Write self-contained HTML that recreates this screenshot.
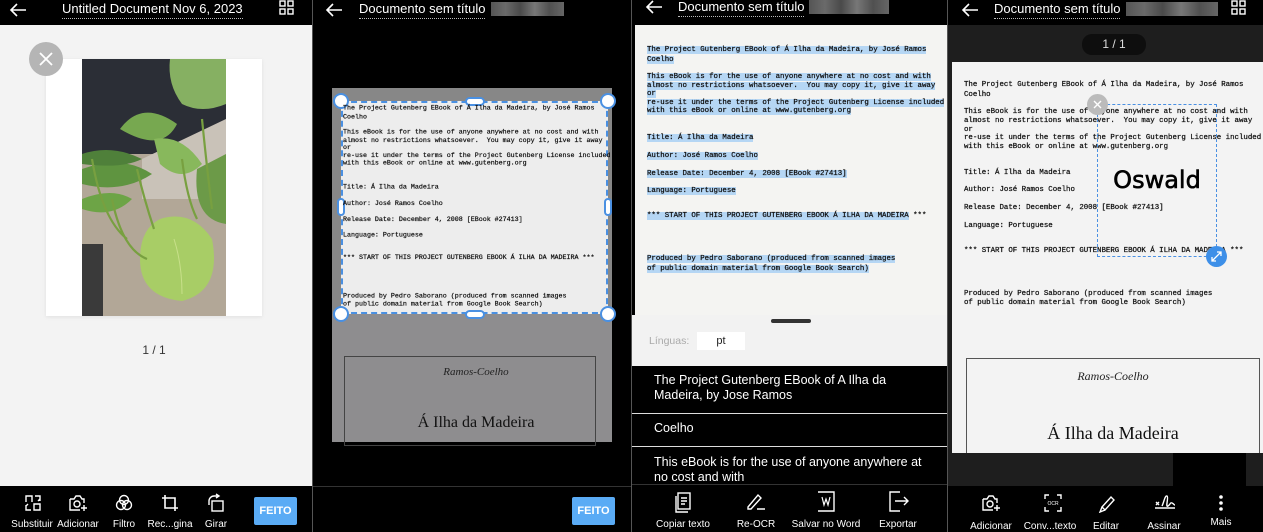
<!DOCTYPE html>
<html><head><meta charset="utf-8"><style>
*{margin:0;padding:0;box-sizing:border-box}
body{width:1263px;height:532px;overflow:hidden;background:#000;position:relative;font-family:"Liberation Sans",sans-serif}
.a{position:absolute}
.ttl{position:absolute;top:0;color:#fff;font-size:13px;line-height:18px;border-bottom:1px dotted #bbb;white-space:nowrap}
.blur{position:absolute;top:2px;height:14px;background:linear-gradient(90deg,#555,#6a6a6a 20%,#4a4a4a 40%,#777 60%,#505050 80%,#666)}
.doc{position:absolute;font-family:"Liberation Mono",monospace;font-size:7.4px;color:#111;white-space:pre;transform-origin:0 0;-webkit-text-stroke:0.25px #111}
.doc div{position:absolute;left:0;line-height:8px}
.hl div span{background:#b5d6f4}
.lbl{position:absolute;color:#fff;font-size:10px;text-align:center;width:70px;white-space:nowrap}
.feito{position:absolute;background:#5aabf5;color:#fff;font-weight:bold;font-size:11px;text-align:center;line-height:28px;border-radius:2px}
svg.i{position:absolute;fill:none;stroke:#fff;stroke-width:1.4}
.row{position:absolute;left:632px;width:315px;background:#000;color:#fff;font-size:12.5px;line-height:15px;padding-left:22px;padding-right:30px;border-bottom:1px solid #ddd}
</style></head><body>

<!-- PANEL 1 -->
<div class="a" style="left:0;top:25px;width:312px;height:461px;background:#f3f3f3"></div>
<svg class="i" style="left:8px;top:2px" width="20" height="16" viewBox="0 0 20 16"><path d="M18 8H3M9 2L3 8l6 6" stroke-width="1.6"/></svg>
<div class="ttl" style="left:62px">Untitled Document Nov 6, 2023</div>
<svg class="i" style="left:279px;top:0" width="16" height="15" viewBox="0 0 16 15"><rect x="1" y="1" width="5" height="5"/><rect x="9" y="1" width="5" height="5"/><rect x="1" y="9" width="5" height="5"/><rect x="9" y="9" width="5" height="5"/></svg>
<div class="a" style="left:46px;top:59px;width:216px;height:257px;background:#fff;box-shadow:0 1px 4px rgba(0,0,0,.08)"></div>
<svg class="a" style="left:82px;top:59px" width="144" height="257" viewBox="0 0 144 257">
<rect width="144" height="257" fill="#b2a797"/>
<rect width="144" height="95" fill="#2b2e36"/>
<path d="M60 100 L144 60 L144 140 L60 140Z" fill="#c9c2b8"/>
<rect x="0" y="185" width="21" height="72" fill="#3a3a3a"/>
<path d="M88 0 L144 0 L144 45 Q120 55 100 45 Q85 25 88 0Z" fill="#86b062"/>
<path d="M38 70 Q60 40 95 65 Q80 95 38 70Z" fill="#77a850"/>
<path d="M72 80 Q100 75 120 105 Q100 125 78 105Z" fill="#88b85c"/>
<path d="M0 110 Q40 95 70 115 Q40 135 0 125Z" fill="#5f9440"/>
<path d="M0 95 Q30 85 60 100 Q40 110 0 105Z" fill="#4f803a"/>
<path d="M0 140 Q30 128 50 140 Q30 160 0 150Z" fill="#6da446"/>
<path d="M115 110 L144 95 L144 165 Q110 160 115 110Z" fill="#6c9a48"/>
<path d="M78 160 Q110 150 130 180 Q140 232 100 242 Q58 238 58 200 Q58 170 78 160Z" fill="#a8cd66"/>
<path d="M92 180 Q100 205 100 235" stroke="#c8e08a" fill="none"/>
<path d="M10 100 Q20 160 45 180 M30 140 Q40 190 65 200 M55 110 Q62 140 72 170 M120 60 Q125 110 130 150 M100 100 Q105 140 115 160" stroke="#78a040" stroke-width="2.2" fill="none"/>
</svg>
<div class="a" style="left:29px;top:42px;width:34px;height:34px;border-radius:50%;background:#b5b5b5"></div>
<svg class="i" style="left:37px;top:50px" width="18" height="18" viewBox="0 0 18 18"><path d="M3 3L15 15M15 3L3 15" stroke-width="1.8"/></svg>
<div class="a" style="left:124px;top:343px;width:60px;text-align:center;font-size:12px;color:#333">1 / 1</div>
<svg class="i" style="left:24px;top:494px" width="18" height="18" viewBox="0 0 18 18"><path d="M2 8V2h6v6M2 11v5h5M10 16h6v-6h-6zM11 2h5v5M4 10l-2 2M14 7l2-2"/></svg>
<svg class="i" style="left:68px;top:494px" width="20" height="18" viewBox="0 0 20 18"><path d="M2 5h4l2-3h4l2 3h2v4M2 5v11h10"/><circle cx="9" cy="10" r="3"/><path d="M16 11v6M13 14h6"/></svg>
<svg class="i" style="left:115px;top:494px" width="18" height="18" viewBox="0 0 18 18"><circle cx="9" cy="6" r="4.5"/><circle cx="6" cy="11" r="4.5"/><circle cx="12" cy="11" r="4.5"/></svg>
<svg class="i" style="left:161px;top:494px" width="18" height="18" viewBox="0 0 18 18"><path d="M4 1v13h13M1 4h13v13" stroke-width="1.6"/></svg>
<svg class="i" style="left:207px;top:493px" width="18" height="19" viewBox="0 0 18 19"><rect x="5" y="8" width="11" height="10"/><path d="M2 12V8a5 5 0 0 1 5-5h4M9 1l3 2-3 2"/></svg>
<div class="lbl" style="left:-3px;top:519px">Substituir</div>
<div class="lbl" style="left:43px;top:519px">Adicionar</div>
<div class="lbl" style="left:89px;top:519px">Filtro</div>
<div class="lbl" style="left:135px;top:519px">Rec...gina</div>
<div class="lbl" style="left:181px;top:519px">Girar</div>
<div class="feito" style="left:254px;top:497px;width:43px;height:28px">FEITO</div>

<div class="a" style="left:312px;top:0;width:1px;height:532px;background:#555"></div>

<!-- PANEL 2 -->
<svg class="i" style="left:324px;top:2px" width="20" height="16" viewBox="0 0 20 16"><path d="M18 8H3M9 2L3 8l6 6" stroke-width="1.6"/></svg>
<div class="ttl" style="left:359px">Documento sem título</div>
<div class="blur" style="left:491px;width:73px"></div>
<div class="a" style="left:332px;top:88px;width:280px;height:354px;background:#878787"></div>
<div class="a" style="left:341px;top:101px;width:267px;height:213px;background:#ededed"></div>
<div class="a" style="left:332px;top:314px;width:280px;height:128px;background:#8e8d8f"></div>
<div class="a" style="left:344px;top:356px;width:252px;height:90px;border:1px solid #444"></div>
<div class="a" style="left:344px;top:366px;width:264px;text-align:center;font-family:'Liberation Serif',serif;font-style:italic;font-size:11px;color:#222">Ramos-Coelho</div>
<div class="a" style="left:344px;top:414px;width:264px;text-align:center;font-family:'Liberation Serif',serif;font-size:16px;color:#111">Á Ilha da Madeira</div>
<div class="a" style="left:341px;top:101px;width:267px;height:213px;border:2px dashed #4a90e2"></div>
<div class="a" style="left:333px;top:93px;width:16px;height:16px;border-radius:50%;background:#fff;border:2px solid #4a90e2"></div>
<div class="a" style="left:600px;top:93px;width:16px;height:16px;border-radius:50%;background:#fff;border:2px solid #4a90e2"></div>
<div class="a" style="left:333px;top:306px;width:16px;height:16px;border-radius:50%;background:#fff;border:2px solid #4a90e2"></div>
<div class="a" style="left:600px;top:306px;width:16px;height:16px;border-radius:50%;background:#fff;border:2px solid #4a90e2"></div>
<div class="a" style="left:465px;top:97px;width:20px;height:9px;border-radius:5px;background:#fff;border:2px solid #4a90e2"></div>
<div class="a" style="left:465px;top:310px;width:20px;height:9px;border-radius:5px;background:#fff;border:2px solid #4a90e2"></div>
<div class="a" style="left:337px;top:198px;width:8px;height:18px;border-radius:5px;background:#fff;border:2px solid #4a90e2"></div>
<div class="a" style="left:604px;top:198px;width:8px;height:18px;border-radius:5px;background:#fff;border:2px solid #4a90e2"></div>
<div class="doc" style="left:343px;top:104px;transform:scale(0.9)">
<div style="top:1px">The Project Gutenberg EBook of Á Ilha da Madeira, by José Ramos</div>
<div style="top:11px">Coelho</div>
<div style="top:28px">This eBook is for the use of anyone anywhere at no cost and with</div>
<div style="top:37px">almost no restrictions whatsoever.  You may copy it, give it away</div>
<div style="top:45px">or</div>
<div style="top:54px">re-use it under the terms of the Project Gutenberg License included</div>
<div style="top:62px">with this eBook or online at www.gutenberg.org</div>
<div style="top:89px">Title: Á Ilha da Madeira</div>
<div style="top:107px">Author: José Ramos Coelho</div>
<div style="top:125px">Release Date: December 4, 2008 [EBook #27413]</div>
<div style="top:142px">Language: Portuguese</div>
<div style="top:167px">*** START OF THIS PROJECT GUTENBERG EBOOK Á ILHA DA MADEIRA ***</div>
<div style="top:210px">Produced by Pedro Saborano (produced from scanned images</div>
<div style="top:219px">of public domain material from Google Book Search)</div>
</div>
<div class="a" style="left:313px;top:486px;width:318px;height:1px;background:#333"></div>
<div class="feito" style="left:572px;top:497px;width:43px;height:28px">FEITO</div>

<div class="a" style="left:631px;top:0;width:1px;height:532px;background:#555"></div>

<!-- PANEL 3 -->
<svg class="i" style="left:644px;top:-1px" width="20" height="16" viewBox="0 0 20 16"><path d="M18 8H3M9 2L3 8l6 6" stroke-width="1.6"/></svg>
<div class="ttl" style="left:678px;top:-2px">Documento sem título</div>
<div class="blur" style="left:809px;top:0;width:80px"></div>
<div class="a" style="left:635px;top:25px;width:312px;height:290px;background:#f4f4f2"></div>
<div class="doc hl" style="left:647px;top:45px">
<div style="top:1px"><span>The Project Gutenberg EBook of Á Ilha da Madeira, by José Ramos</span></div>
<div style="top:11px"><span>Coelho</span></div>
<div style="top:28px"><span>This eBook is for the use of anyone anywhere at no cost and with</span></div>
<div style="top:37px"><span>almost no restrictions whatsoever.  You may copy it, give it away</span></div>
<div style="top:45px"><span>or</span></div>
<div style="top:54px"><span>re-use it under the terms of the Project Gutenberg License included</span></div>
<div style="top:62px"><span>with this eBook or online at www.gutenberg.org</span></div>
<div style="top:89px"><span>Title: Á Ilha da Madeira</span></div>
<div style="top:107px"><span>Author: José Ramos Coelho</span></div>
<div style="top:125px"><span>Release Date: December 4, 2008 [EBook #27413]</span></div>
<div style="top:142px"><span>Language: Portuguese</span></div>
<div style="top:167px"><span>*** START OF THIS PROJECT GUTENBERG EBOOK Á ILHA DA MADEIRA</span> ***</div>
<div style="top:210px"><span>Produced by Pedro Saborano (produced from scanned images</span></div>
<div style="top:220px"><span>of public domain material from Google Book Search)</span></div>
</div>
<div class="a" style="left:632px;top:315px;width:315px;height:51px;background:#f2f2f2"></div>
<div class="a" style="left:771px;top:319px;width:40px;height:4px;border-radius:2px;background:#333"></div>
<div class="a" style="left:649px;top:335px;font-size:10.5px;color:#aaa">Línguas:</div>
<div class="a" style="left:697px;top:332px;width:48px;height:18px;background:#fff;font-size:11px;line-height:18px;text-align:center;color:#222">pt</div>
<div class="row" style="top:366px;height:48px;padding-top:7px;padding-right:60px">The Project Gutenberg EBook of A Ilha da Madeira, by Jose Ramos</div>
<div class="row" style="top:414px;height:33px;padding-top:7px">Coelho</div>
<div class="row" style="top:447px;height:38px;padding-top:8px;padding-right:18px;border-bottom:1px solid #333">This eBook is for the use of anyone anywhere at no cost and with</div>
<svg class="i" style="left:674px;top:492px" width="18" height="21" viewBox="0 0 18 21"><rect x="4" y="1" width="12" height="16"/><path d="M2 4v16h12M7 6h6M7 9h6M7 12h4"/></svg>
<svg class="i" style="left:745px;top:492px" width="22" height="20" viewBox="0 0 22 20"><path d="M3 15L13 3l3 3L6 17H3zM12 17h8"/></svg>
<svg class="i" style="left:816px;top:491px" width="20" height="21" viewBox="0 0 20 21"><path d="M4 1h14v19H4M2 1h2M2 20h2"/><path d="M6 6l2 8 2-6 2 6 2-8" stroke-width="1.2"/></svg>
<svg class="i" style="left:888px;top:491px" width="22" height="21" viewBox="0 0 22 21"><path d="M12 1H2v19h10M7 10h13M16 6l4 4-4 4"/></svg>
<div class="lbl" style="left:648px;top:519px">Copiar texto</div>
<div class="lbl" style="left:721px;top:519px">Re-OCR</div>
<div class="lbl" style="left:791px;top:519px">Salvar no Word</div>
<div class="lbl" style="left:863px;top:519px">Exportar</div>

<div class="a" style="left:947px;top:0;width:1px;height:532px;background:#555"></div>

<!-- PANEL 4 -->
<div class="a" style="left:948px;top:25px;width:315px;height:461px;background:#1e1e1e"></div>
<svg class="i" style="left:960px;top:2px" width="20" height="16" viewBox="0 0 20 16"><path d="M18 8H3M9 2L3 8l6 6" stroke-width="1.6"/></svg>
<div class="ttl" style="left:994px">Documento sem título</div>
<div class="blur" style="left:1126px;width:92px"></div>
<svg class="i" style="left:1231px;top:0" width="16" height="15" viewBox="0 0 16 15"><rect x="1" y="1" width="5" height="5"/><rect x="9" y="1" width="5" height="5"/><rect x="1" y="9" width="5" height="5"/><rect x="9" y="9" width="5" height="5"/></svg>
<div class="a" style="left:1082px;top:34px;width:64px;height:21px;border-radius:10px;background:#0e0e0e;color:#ddd;font-size:12px;line-height:21px;text-align:center">1 / 1</div>
<div class="a" style="left:952px;top:62px;width:311px;height:391px;background:#f3f3f3"></div>
<div class="doc" style="left:964px;top:80px">
<div style="top:1px">The Project Gutenberg EBook of Á Ilha da Madeira, by José Ramos</div>
<div style="top:11px">Coelho</div>
<div style="top:28px">This eBook is for the use of anyone anywhere at no cost and with</div>
<div style="top:37px">almost no restrictions whatsoever.  You may copy it, give it away</div>
<div style="top:46px">or</div>
<div style="top:54px">re-use it under the terms of the Project Gutenberg License included</div>
<div style="top:63px">with this eBook or online at www.gutenberg.org</div>
<div style="top:89px">Title: Á Ilha da Madeira</div>
<div style="top:106px">Author: José Ramos Coelho</div>
<div style="top:124px">Release Date: December 4, 2008 [EBook #27413]</div>
<div style="top:142px">Language: Portuguese</div>
<div style="top:167px">*** START OF THIS PROJECT GUTENBERG EBOOK Á ILHA DA MADEIRA ***</div>
<div style="top:210px">Produced by Pedro Saborano (produced from scanned images</div>
<div style="top:219px">of public domain material from Google Book Search)</div>
</div>
<div class="a" style="left:966px;top:358px;width:294px;height:100px;border:1px solid #555"></div>
<div class="a" style="left:966px;top:369px;width:294px;text-align:center;font-family:'Liberation Serif',serif;font-style:italic;font-size:12px;color:#222">Ramos-Coelho</div>
<div class="a" style="left:966px;top:423px;width:294px;text-align:center;font-family:'Liberation Serif',serif;font-size:18px;color:#111">Á Ilha da Madeira</div>
<div class="a" style="left:952px;top:453px;width:311px;height:33px;background:#1e1e1e"></div>
<div class="a" style="left:1097px;top:104px;width:120px;height:153px;border:1px dashed #4a90e2"></div>
<div class="a" style="left:1097px;top:166px;width:120px;text-align:center;font-family:'DejaVu Sans',sans-serif;font-size:24px;color:#000;-webkit-text-stroke:0.6px #000">Oswald</div>
<div class="a" style="left:1087px;top:94px;width:21px;height:21px;border-radius:50%;background:#bbb"></div>
<svg class="i" style="left:1092px;top:99px" width="11" height="11" viewBox="0 0 11 11"><path d="M2 2l7 7M9 2L2 9" stroke-width="1.4"/></svg>
<div class="a" style="left:1206px;top:246px;width:21px;height:21px;border-radius:50%;background:#3d8fe8"></div>
<svg class="i" style="left:1210px;top:250px" width="13" height="13" viewBox="0 0 13 13"><path d="M2 11L11 2M2 7v4h4M7 2h4v4" stroke-width="1.3"/></svg>
<div class="a" style="left:1173px;top:453px;width:73px;height:38px;background:#000"></div>
<svg class="i" style="left:981px;top:494px" width="20" height="18" viewBox="0 0 20 18"><path d="M2 5h4l2-3h4l2 3h2v4M2 5v11h10"/><circle cx="9" cy="10" r="3"/><path d="M16 11v6M13 14h6"/></svg>
<svg class="i" style="left:1044px;top:494px" width="18" height="18" viewBox="0 0 18 18"><path d="M1 5V1h4M13 1h4v4M1 13v4h4M13 17h4v-4"/><text x="9" y="11" font-size="5" fill="#fff" stroke="none" text-anchor="middle" font-family="Liberation Sans">OCR</text></svg>
<svg class="i" style="left:1097px;top:494px" width="20" height="19" viewBox="0 0 20 19"><path d="M5 13L14 3l3 3-9 10zM5 13l-2 5 5-2"/></svg>
<svg class="i" style="left:1153px;top:493px" width="24" height="20" viewBox="0 0 24 20"><path d="M2 15h20M3 9l3 3M6 9l-3 3M9 13c2-4 3-11 5-10s-2 12 1 10 2-4 4-3 2 2 3 2"/></svg>
<svg class="a" style="left:1218px;top:494px" width="6" height="18" viewBox="0 0 6 18"><circle cx="3" cy="3" r="1.8" fill="#fff"/><circle cx="3" cy="9" r="1.8" fill="#fff"/><circle cx="3" cy="15" r="1.8" fill="#fff"/></svg>
<div class="lbl" style="left:956px;top:521px">Adicionar</div>
<div class="lbl" style="left:1015px;top:521px">Conv...texto</div>
<div class="lbl" style="left:1071px;top:521px">Editar</div>
<div class="lbl" style="left:1129px;top:521px">Assinar</div>
<div class="lbl" style="left:1186px;top:517px">Mais</div>
</body></html>
